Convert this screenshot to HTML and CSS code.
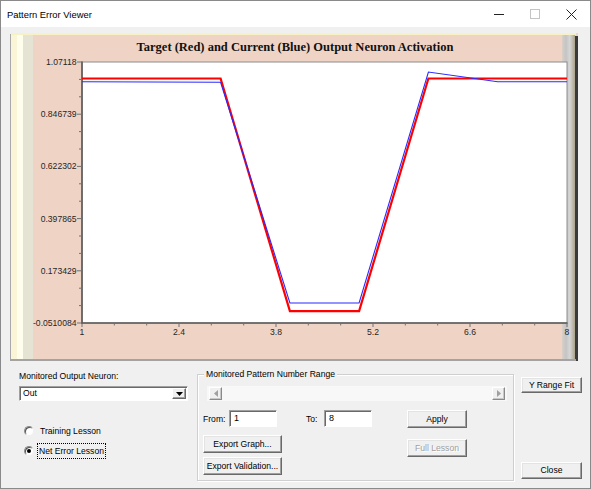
FILE: index.html
```html
<!DOCTYPE html>
<html>
<head>
<meta charset="utf-8">
<link rel="stylesheet" href="styles.css">
</head>
<body>
<div class="window">
  <div class="titlebar">
    <span class="title">Pattern Error Viewer</span>
    <div class="caption">
      <span class="cap-btn"><svg width="10" height="10" viewBox="0 0 10 10"><line x1="0" y1="5.5" x2="10" y2="5.5" stroke="#222" stroke-width="1"/></svg></span>
      <span class="cap-btn"><svg width="10" height="10" viewBox="0 0 10 10"><rect x="0.5" y="0.5" width="9" height="9" fill="none" stroke="#c4c4c4" stroke-width="1"/></svg></span>
      <span class="cap-btn"><svg width="11" height="11" viewBox="0 0 11 11"><path d="M0.5 0.5 L10.5 10.5 M10.5 0.5 L0.5 10.5" stroke="#222" stroke-width="1"/></svg></span>
    </div>
  </div>

  <div class="chart">
    <svg width="568" height="328" viewBox="10 33 568 328" xmlns="http://www.w3.org/2000/svg">
      <defs>
        <linearGradient id="rg" x1="0" y1="0" x2="1" y2="0">
          <stop offset="0" stop-color="#d9d0c8"/>
          <stop offset="0.3" stop-color="#c4c4c4"/>
          <stop offset="0.6" stop-color="#d6d6d6"/>
          <stop offset="1" stop-color="#aaa48c"/>
        </linearGradient>
      </defs>
      <rect x="10" y="33" width="568" height="328" fill="#efd4c5"/>
      <rect x="10" y="33" width="566" height="2" fill="#f7f1c4"/>
      <rect x="10" y="34" width="1" height="327" fill="#a9a9a9"/>
      <rect x="11" y="35" width="6" height="325" fill="#f9f5d6"/>
      <rect x="17" y="35" width="6" height="325" fill="#fffeec"/>
      <rect x="23" y="35" width="10" height="325" fill="#e5e4d4"/>
      <rect x="562" y="35" width="13" height="325" fill="url(#rg)"/>
      <rect x="575" y="36" width="3" height="325" fill="#3a3a3a"/>
      <rect x="10" y="359" width="566" height="2" fill="#a3a3a3"/>

      <rect x="82" y="62" width="485" height="261" fill="#ffffff" stroke="#8c8c8c" stroke-width="1"/>
      <line x1="82" y1="61.5" x2="82" y2="324" stroke="#5a5a5a" stroke-width="1.6"/>
      <line x1="81" y1="323" x2="567.5" y2="323" stroke="#5a5a5a" stroke-width="1.6"/>

      <g stroke="#707070" stroke-width="1">
        <line x1="77" y1="62" x2="82" y2="62"/>
        <line x1="77" y1="114.2" x2="82" y2="114.2"/>
        <line x1="77" y1="166.4" x2="82" y2="166.4"/>
        <line x1="77" y1="218.6" x2="82" y2="218.6"/>
        <line x1="77" y1="270.8" x2="82" y2="270.8"/>
        <line x1="77" y1="323" x2="82" y2="323"/>
        <line x1="79" y1="79.4" x2="82" y2="79.4"/>
        <line x1="79" y1="96.8" x2="82" y2="96.8"/>
        <line x1="79" y1="131.6" x2="82" y2="131.6"/>
        <line x1="79" y1="149" x2="82" y2="149"/>
        <line x1="79" y1="183.8" x2="82" y2="183.8"/>
        <line x1="79" y1="201.2" x2="82" y2="201.2"/>
        <line x1="79" y1="236" x2="82" y2="236"/>
        <line x1="79" y1="253.4" x2="82" y2="253.4"/>
        <line x1="79" y1="288.2" x2="82" y2="288.2"/>
        <line x1="79" y1="305.6" x2="82" y2="305.6"/>

        <line x1="82" y1="323" x2="82" y2="327"/>
        <line x1="179" y1="323" x2="179" y2="327"/>
        <line x1="276" y1="323" x2="276" y2="327"/>
        <line x1="373" y1="323" x2="373" y2="327"/>
        <line x1="470" y1="323" x2="470" y2="327"/>
        <line x1="567" y1="323" x2="567" y2="327"/>
        <line x1="114.3" y1="323" x2="114.3" y2="325.5"/>
        <line x1="146.7" y1="323" x2="146.7" y2="325.5"/>
        <line x1="211.3" y1="323" x2="211.3" y2="325.5"/>
        <line x1="243.7" y1="323" x2="243.7" y2="325.5"/>
        <line x1="308.3" y1="323" x2="308.3" y2="325.5"/>
        <line x1="340.7" y1="323" x2="340.7" y2="325.5"/>
        <line x1="405.3" y1="323" x2="405.3" y2="325.5"/>
        <line x1="437.7" y1="323" x2="437.7" y2="325.5"/>
        <line x1="502.3" y1="323" x2="502.3" y2="325.5"/>
        <line x1="534.7" y1="323" x2="534.7" y2="325.5"/>
      </g>

      <g class="axis-text" text-anchor="end">
        <text x="76.5" y="65">1.07118</text>
        <text x="76.5" y="117.2">0.846739</text>
        <text x="76.5" y="169.4">0.622302</text>
        <text x="76.5" y="221.6">0.397865</text>
        <text x="76.5" y="273.8">0.173429</text>
        <text x="76.5" y="326">-0.0510084</text>
      </g>
      <g class="axis-text" text-anchor="middle">
        <text x="82" y="335">1</text>
        <text x="179" y="335">2.4</text>
        <text x="276" y="335">3.8</text>
        <text x="373" y="335">5.2</text>
        <text x="470" y="335">6.6</text>
        <text x="567" y="335">8</text>
      </g>

      <text class="chart-title" x="295" y="51" text-anchor="middle">Target (Red) and Current (Blue) Output Neuron Activation</text>

      <polyline points="82,78.5 220.6,78.5 289.9,311.1 359.1,311.1 428.4,78.5 567,78.5" fill="none" stroke="#ff0000" stroke-width="2.2" stroke-linejoin="miter"/>
      <polyline points="82,81.7 220.6,82.3 289.9,303 359.1,303 428.4,72 497.7,81.7 567,81.7" fill="none" stroke="#2a2aff" stroke-width="1.1"/>
    </svg>
  </div>

  <div class="controls">
    <div class="col-left">
      <div class="lbl">Monitored Output Neuron:</div>
      <div class="combo">
        <span class="combo-text">Out</span>
        <span class="combo-btn"><svg width="7" height="4" viewBox="0 0 7 4"><path d="M0 0 H7 L3.5 4 Z" fill="#000"/></svg></span>
      </div>
      <div class="radios">
        <div class="radio"><span class="dot"></span><span class="rlabel">Training Lesson</span></div>
        <div class="radio checked"><span class="dot"></span><span class="rlabel focus">Net Error Lesson</span></div>
      </div>
    </div>

    <div class="group">
      <span class="legend">Monitored Pattern Number Range</span>
      <div class="scrollbar">
        <span class="sb-btn"><svg width="4" height="7" viewBox="0 0 4 7"><path d="M4 0 V7 L0 3.5 Z" fill="#a0a0a0"/></svg></span>
        <span class="sb-btn"><svg width="4" height="7" viewBox="0 0 4 7"><path d="M0 0 V7 L4 3.5 Z" fill="#a0a0a0"/></svg></span>
      </div>
      <div class="group-body">
        <div class="gleft">
          <div class="range-row">
            <span class="from-lbl">From:</span>
            <span class="field">1</span>
            <span class="to-lbl">To:</span>
            <span class="field">8</span>
          </div>
          <button class="btn btn-export first">Export Graph...</button>
          <button class="btn btn-export second">Export Validation...</button>
        </div>
        <div class="gright">
          <button class="btn btn-apply">Apply</button>
          <button class="btn btn-full disabled">Full Lesson</button>
        </div>
      </div>
    </div>

    <div class="col-right">
      <button class="btn btn-side">Y Range Fit</button>
      <button class="btn btn-side btn-close">Close</button>
    </div>
  </div>
</div>
</body>
</html>
```

FILE: styles.css
```css
* { box-sizing: border-box; }

html, body {
  margin: 0;
  padding: 0;
  background: #f0f0f0;
}

body {
  font-family: "Liberation Sans", Arial, sans-serif;
  font-size: 8.6px;
  color: #000;
}

.window {
  width: 591px;
  height: 489px;
  border: 1px solid #8a8a8a;
  background: #f0f0f0;
  overflow: hidden;
}

.titlebar {
  height: 26px;
  background: #ffffff;
  display: flex;
  align-items: center;
  justify-content: space-between;
  padding-left: 6px;
}

.title {
  font-family: "Liberation Sans", Arial, sans-serif;
  font-size: 9.4px;
  color: #000;
  padding-top: 1px;
}

.caption {
  display: flex;
  height: 100%;
  margin-right: 1px;
}

.cap-btn {
  width: 36px;
  height: 100%;
  display: flex;
  align-items: center;
  justify-content: center;
}

.chart {
  margin-top: 6px;
  margin-left: 9px;
  height: 328px;
  line-height: 0;
}

.chart svg { display: block; }

.axis-text {
  font-family: "Liberation Sans", Arial, sans-serif;
  font-size: 8.6px;
  fill: #262626;
}

.chart-title {
  font-family: "Liberation Serif", "Times New Roman", serif;
  font-weight: bold;
  font-size: 12.5px;
  fill: #111;
}

.controls {
  display: flex;
  align-items: flex-start;
}

.col-left {
  margin-left: 18px;
  width: 170px;
}

.lbl {
  margin-top: 10px;
  line-height: 11px;
  height: 11px;
}

.combo {
  margin-top: 4px;
  width: 169px;
  height: 15px;
  background: #fff;
  border: 1px solid;
  border-color: #a0a0a0 #ffffff #ffffff #a0a0a0;
  box-shadow: inset 1px 1px 0 #696969;
  display: flex;
  align-items: center;
  justify-content: space-between;
  padding: 1px 1px 1px 3px;
}

.combo-text { line-height: 11px; }

.combo-btn {
  width: 14px;
  height: 11px;
  background: #f0f0f0;
  border: 1px solid;
  border-color: #ffffff #696969 #696969 #ffffff;
  box-shadow: inset -1px -1px 0 #a0a0a0;
  display: flex;
  align-items: center;
  justify-content: center;
}

.radios {
  margin-top: 23px;
  margin-left: 5px;
  display: flex;
  flex-direction: column;
  gap: 6px;
}

.radio {
  display: flex;
  align-items: center;
  height: 14px;
}

.dot {
  width: 10px;
  height: 10px;
  border-radius: 50%;
  background: #fff;
  border: 1px solid;
  border-color: #8a8a8a #f0f0f0 #f0f0f0 #8a8a8a;
  box-shadow: inset 1px 1px 0 #505050;
  display: flex;
  align-items: center;
  justify-content: center;
}

.radio.checked .dot::after {
  content: "";
  width: 4px;
  height: 4px;
  border-radius: 50%;
  background: #000;
}

.rlabel {
  margin-left: 4px;
  line-height: 12px;
  padding: 1px 1px;
  border: 1px solid transparent;
}

.rlabel.focus {
  margin-left: 3px;
  border: 1px dotted #000;
}

.group {
  position: relative;
  margin-top: 13px;
  margin-left: 8px;
  width: 317px;
  height: 107px;
  border: 1px solid #cfcfcf;
  box-shadow: inset 1px 1px 0 #ffffff, 1px 1px 0 #ffffff;
}

.legend {
  position: absolute;
  top: -6px;
  left: 6px;
  padding: 0 2px;
  line-height: 11px;
  background: #f0f0f0;
}

.scrollbar {
  margin-top: 11px;
  margin-left: 9px;
  width: 300px;
  height: 15px;
  background: #f8f8f8;
  display: flex;
  justify-content: space-between;
  align-items: center;
  padding: 0 2px;
}

.sb-btn {
  width: 13px;
  height: 13px;
  background: #f0f0f0;
  border: 1px solid;
  border-color: #ffffff #8a8a8a #8a8a8a #ffffff;
  box-shadow: inset -1px -1px 0 #c8c8c8;
  display: flex;
  align-items: center;
  justify-content: center;
}

.group-body {
  display: flex;
  margin-top: 9px;
  margin-left: 5px;
}

.gleft {
  width: 169px;
  display: flex;
  flex-direction: column;
  align-items: flex-start;
}

.range-row {
  display: flex;
  align-items: center;
  height: 17px;
}

.from-lbl { width: 26px; }
.to-lbl { width: 18px; margin-left: 29px; }

.field {
  width: 48px;
  height: 17px;
  background: #fff;
  border: 1px solid;
  border-color: #a0a0a0 #ffffff #ffffff #a0a0a0;
  box-shadow: inset 1px 1px 0 #696969;
  padding: 2px 0 0 4px;
  line-height: 11px;
  font-size: 9px;
}

.btn {
  font-family: "Liberation Sans", Arial, sans-serif;
  font-size: 8.6px;
  color: #000;
  background: #f0f0f0;
  border: 1px solid;
  border-color: #ffffff #696969 #696969 #ffffff;
  box-shadow: inset -1px -1px 0 #a0a0a0, inset 1px 1px 0 #e3e3e3;
  padding: 0;
  margin: 0;
  display: flex;
  align-items: center;
  justify-content: center;
  line-height: 11px;
}

.btn-export {
  width: 79px;
  height: 18px;
}

.btn-export.first { margin-top: 8px; }
.btn-export.second { margin-top: 4px; }

.gright {
  margin-left: 35px;
  display: flex;
  flex-direction: column;
}

.btn-apply {
  width: 60px;
  height: 18px;
}

.btn-full {
  width: 60px;
  height: 18px;
  margin-top: 11px;
}

.btn.disabled {
  color: #a0a0a0;
  text-shadow: 1px 1px 0 #ffffff;
}

.col-right {
  margin-left: 7px;
  margin-top: 16px;
  display: flex;
  flex-direction: column;
}

.btn-side {
  width: 61px;
  height: 16px;
}

.btn-close {
  height: 17px;
  margin-top: 69px;
}
```
